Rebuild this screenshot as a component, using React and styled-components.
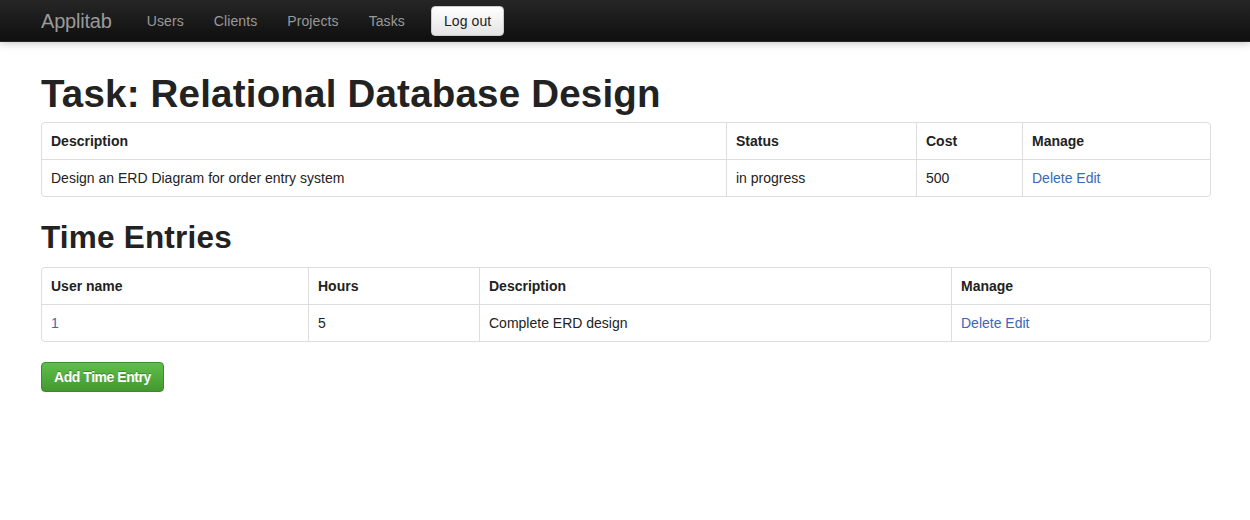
import React from "react";
import styled, { createGlobalStyle } from "styled-components";

const GlobalStyle = createGlobalStyle`
  body {
    margin: 0;
    background: #fff;
    font-family: "Liberation Sans", Arial, sans-serif;
    font-size: 14px;
    line-height: 20px;
    color: #333;
  }
`;

const Navbar = styled.div`
  height: 42px;
  background: linear-gradient(to bottom, #262626, #0f0f0f);
  border-bottom: 1px solid #252525;
  box-shadow: 0 1px 8px rgba(0, 0, 0, 0.25);
  display: flex;
  align-items: center;
  padding: 1px 40px 0;
  box-sizing: border-box;
`;

const Brand = styled.a`
  font-size: 20px;
  font-weight: 300;
  color: #9a9a9a;
  padding: 10px 20px 10px 1px;
  letter-spacing: -0.2px;
`;

const NavLink = styled.a`
  color: #999;
  padding: 10px 15px;
  font-size: 14px;
  letter-spacing: 0.1px;
`;

const LogoutButton = styled.button`
  margin-left: 11px;
  height: 30px;
  padding: 0 12px;
  font-family: inherit;
  font-size: 14px;
  color: #222;
  background: linear-gradient(to bottom, #ffffff, #e4e4e4);
  border: 1px solid #ccc;
  border-radius: 4px;
  box-shadow: inset 0 1px 0 rgba(255, 255, 255, 0.3);
  letter-spacing: 0.1px;
`;

const Container = styled.div`
  width: 1170px;
  margin: 0 0 0 41px;
  padding-top: 32px;
`;

const Title = styled.h1`
  font-size: 38.5px;
  line-height: 40px;
  margin: 0 0 8px;
  color: #222;
  font-weight: bold;
  letter-spacing: 0.2px;
`;

const SubTitle = styled.h2`
  font-size: 31.5px;
  line-height: 40px;
  margin: 0 0 10px;
  color: #222;
  font-weight: bold;
  letter-spacing: 0.2px;
`;

const Table = styled.table`
  width: 100%;
  border-collapse: separate;
  border-spacing: 0;
  border: 1px solid #ddd;
  border-radius: 4px;
  margin-bottom: 20px;
  color: #222;

  th,
  td {
    text-align: left;
    padding: 8px 9px;
    line-height: 20px;
    border-left: 1px solid #ddd;
  }
  th:first-child,
  td:first-child {
    border-left: none;
  }
  td {
    border-top: 1px solid #ddd;
  }
  th {
    font-weight: bold;
  }
`;

const Link = styled.a`
  color: #3a68bb;
  text-decoration: none;
`;

const SuccessButton = styled.button`
  height: 30px;
  padding: 0 12px;
  font-family: inherit;
  font-size: 14px;
  font-weight: bold;
  color: #fff;
  text-shadow: 0 -1px 0 rgba(0, 0, 0, 0.25);
  background: linear-gradient(to bottom, #5fbf4b, #44982f);
  border: 1px solid #3f8a2f;
  border-radius: 4px;
  letter-spacing: -0.45px;
`;

const taskCols = ["684px", "190px", "106px", "auto"];
const entryCols = ["266px", "171px", "472px", "auto"];

function App() {
  return (
    <>
      <GlobalStyle />
      <Navbar>
        <Brand>Applitab</Brand>
        <NavLink>Users</NavLink>
        <NavLink>Clients</NavLink>
        <NavLink>Projects</NavLink>
        <NavLink>Tasks</NavLink>
        <LogoutButton>Log out</LogoutButton>
      </Navbar>
      <Container>
        <Title>Task: Relational Database Design</Title>
        <Table>
          <colgroup>
            {taskCols.map((w, i) => (
              <col key={i} style={{ width: w }} />
            ))}
          </colgroup>
          <thead>
            <tr>
              <th>Description</th>
              <th>Status</th>
              <th>Cost</th>
              <th>Manage</th>
            </tr>
          </thead>
          <tbody>
            <tr>
              <td>Design an ERD Diagram for order entry system</td>
              <td>in progress</td>
              <td>500</td>
              <td>
                <Link>Delete</Link> <Link>Edit</Link>
              </td>
            </tr>
          </tbody>
        </Table>
        <SubTitle>Time Entries</SubTitle>
        <Table>
          <colgroup>
            {entryCols.map((w, i) => (
              <col key={i} style={{ width: w }} />
            ))}
          </colgroup>
          <thead>
            <tr>
              <th>User name</th>
              <th>Hours</th>
              <th>Description</th>
              <th>Manage</th>
            </tr>
          </thead>
          <tbody>
            <tr>
              <td>
                <Link>1</Link>
              </td>
              <td>5</td>
              <td>Complete ERD design</td>
              <td>
                <Link>Delete</Link> <Link>Edit</Link>
              </td>
            </tr>
          </tbody>
        </Table>
        <SuccessButton>Add Time Entry</SuccessButton>
      </Container>
    </>
  );
}

export default App;
